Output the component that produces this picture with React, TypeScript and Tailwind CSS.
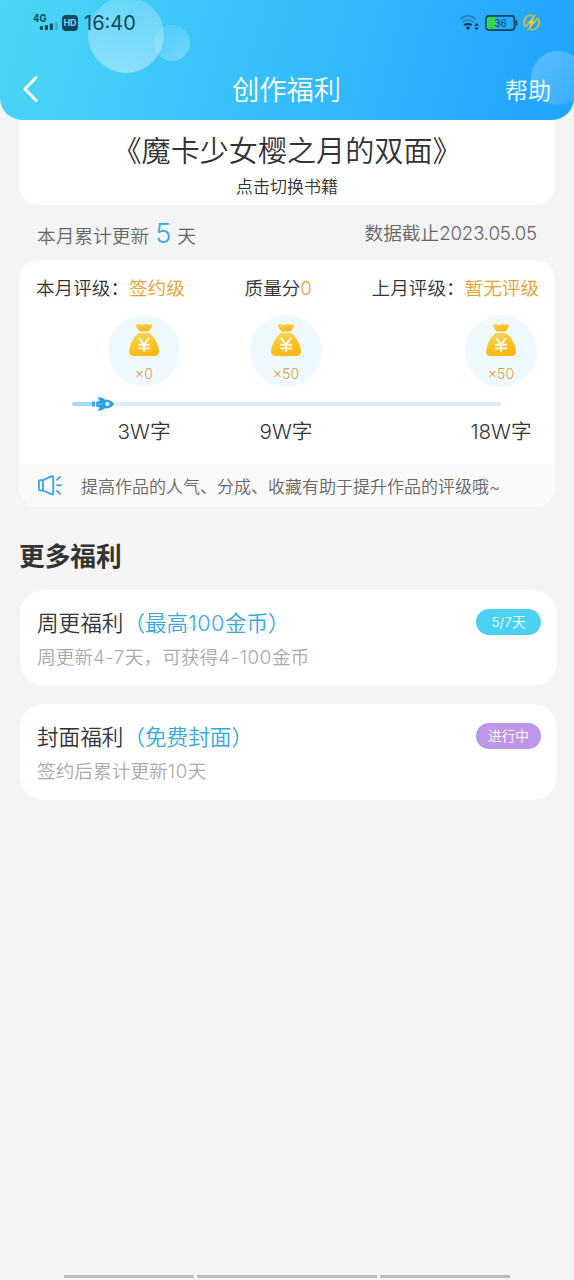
import clsx from 'clsx';

type Reward = { id: string; coins: string; words: string; className: string };

const rewards: Reward[] = [
  { id: '3w', coins: '×0', words: '3W字', className: 'ml-[89px]' },
  { id: '9w', coins: '×50', words: '9W字', className: 'ml-[70px]' },
  { id: '18w', coins: '×50', words: '18W字', className: 'ml-[143px]' },
];

function SignalIcon() {
  return (
    <svg width="26" height="20" viewBox="0 0 26 20" className="block text-[#10475a]">
      <text x="0" y="8.6" fontSize="10.5" fontWeight="700" fill="currentColor" fontFamily="Inter, sans-serif" textLength="13.5" lengthAdjust="spacingAndGlyphs">
        4G
      </text>
      <g fill="currentColor">
        <rect x="6.8" y="13" width="3.2" height="4" rx="1" />
        <rect x="11.8" y="12" width="3.2" height="5" rx="1" />
        <rect x="16.8" y="10.5" width="3.2" height="6.5" rx="1" />
        <rect x="21.8" y="9" width="3" height="8" rx="1" opacity="0.25" />
      </g>
    </svg>
  );
}

function WifiIcon() {
  return (
    <svg width="20" height="16" viewBox="0 0 20 16" fill="none" className="block">
      <path d="M1 4.2Q9 -2.2 17 4.2" stroke="#2389bb" strokeWidth="2" />
      <path d="M3.4 7Q9 2.6 14.6 7" stroke="#2389bb" strokeWidth="1.6" />
      <path d="M4.4 9.3Q9 6 13.6 9.3L11.8 11Q9 9 6.2 11Z" fill="#0d3553" />
      <circle cx="9" cy="13" r="1.8" fill="#0d3553" />
      <path d="M17.6 7.8L19.8 11H15.4ZM17.6 15.6L15.4 12.4H19.8Z" fill="#0d3553" />
    </svg>
  );
}

function BatteryIcon() {
  return (
    <svg width="33" height="16" viewBox="0 0 33 16" className="block">
      <path d="M4 1H11V15H4Q1 15 1 12V4Q1 1 4 1Z" fill="#35d84c" />
      <rect x="0.9" y="0.9" width="28.6" height="14.2" rx="3" fill="none" stroke="#104264" strokeWidth="1.7" />
      <rect x="30.7" y="5" width="1.6" height="6" rx="0.8" fill="#104264" />
      <text x="15.4" y="11.6" fontSize="10" fontWeight="400" textAnchor="middle" fill="#104264" fontFamily="Inter, sans-serif">
        36
      </text>
    </svg>
  );
}

function PowerIcon() {
  return (
    <svg width="17" height="17" viewBox="0 0 17 17" fill="none" className="block">
      <g stroke="#c9bc43" strokeWidth="1.8" strokeLinecap="round">
        <path d="M8.6 1.2A7.3 7.3 0 0 0 2.2 12.4L4.8 10.6" />
        <path d="M5 15.6L7.4 13.8" />
        <path d="M8.4 15.8A7.3 7.3 0 0 0 14.8 4.6L12.4 6.2" />
        <path d="M12 1.4L9.6 3.2" />
      </g>
      <path d="M11.6 2.2L4 9.4H7.6L5.8 14.6L13.2 7.2H9.6Z" fill="#ffd12a" />
    </svg>
  );
}

function MoneyBag() {
  return (
    <svg width="32" height="34" viewBox="0 0 32 34" className="block">
      <defs>
        <linearGradient id="bag" x1="0" y1="0" x2="0.4" y2="1">
          <stop offset="0" stopColor="#f7d96a" />
          <stop offset="0.55" stopColor="#fcc52c" />
          <stop offset="1" stopColor="#fdb713" />
        </linearGradient>
      </defs>
      <path d="M8.3 1.6Q10 .2 12.3 1.4Q14.1 2.4 16 1.2Q18 .1 20 1.2Q22 2 23.4 1.3Q24.8 2 23.6 4Q22 6.8 20.4 8.6H11.8Q9.6 6.5 8 3.5Q7.5 2.3 8.3 1.6Z" fill="url(#bag)" />
      <path d="M10.7 10H21.4C26 13.5 30.2 21 30.9 27.5C31.2 31 29.8 32.9 26.5 33H5.5C2.2 32.9 .8 31 1.1 27.5C1.8 21 6 13.5 10.7 10Z" fill="url(#bag)" />
      <path d="M11 15L16 21.5L21 15M16 21.5V29M10.2 21.7H21.8M10.2 25.4H21.8" fill="none" stroke="#fff" strokeWidth="1.9" />
    </svg>
  );
}

function Rocket() {
  return (
    <svg width="24" height="14" viewBox="0 0 24 14" className="block">
      <path d="M6.4 .3C10.5 .3 12.3 1.2 13.4 2.5C18 2.4 21.5 4.4 23.4 7C21.5 9.7 18 11.8 13.4 11.5C12.2 12.8 10.4 13.7 6.6 13.8L8.7 10.4L4.8 9.3V4.9L8.7 3.7Z" fill="#2c9fe9" />
      <path d="M1 4.8H4V6.4H1ZM0 6.6H4V7.8H0ZM1 8H4V9.5H1Z" fill="#2c9fe9" />
      <path d="M5 7.1H12" stroke="#8bd0fa" strokeWidth="0.8" />
      <circle cx="16.4" cy="7" r="2.1" fill="#fff" />
    </svg>
  );
}

function SpeakerIcon() {
  return (
    <svg width="24" height="21" viewBox="0 0 24 21" fill="none" stroke="#3ba9e3" strokeWidth="1.9" strokeLinecap="round" strokeLinejoin="round" className="block">
      <path d="M5 5.2L13.4 1.3Q15.2 .6 15.2 2.2V18.4Q15.2 20 13.4 19.2L5 15.5" />
      <path d="M5 5.2H2.4Q.9 5.2 .9 6.8V13.9Q.9 15.5 2.4 15.5H5Z" />
      <path d="M19 4.8L22 1.8M19.2 10.3H22.8M19 15.8L22 18.8" />
    </svg>
  );
}

function Header() {
  return (
    <header className="relative h-[120px] overflow-hidden rounded-b-[22px] bg-linear-[105deg,#4bd7f6_0%,#37c0fc_45%,#20a3ff_100%]">
      {/* Decorative bubbles */}
      <div className="absolute -top-[3px] left-[88px] size-[76px] rounded-full bg-linear-to-b from-white/20 to-white/40" />
      <div className="absolute top-[25px] left-[154px] size-9 rounded-full bg-linear-to-br from-white/5 to-white/30" />
      <div className="absolute top-[51px] left-[531px] size-[54px] rounded-full bg-linear-to-br from-white/25 to-white/10" />

      <div className="relative flex h-[45px] items-center justify-between pr-[34px] pl-[33px]">
        <div className="flex items-center">
          <SignalIcon />
          <span className="ml-[3px] flex h-4 w-4 items-center justify-center rounded-[4px] bg-[#10475a] text-[9px] leading-none font-bold text-[#74dbfb]">
            HD
          </span>
          <span className="ml-[6px] text-[20px] leading-none font-normal text-[#10475a]">16:40</span>
        </div>
        <div className="flex items-center">
          <WifiIcon />
          <span className="ml-[6px]"><BatteryIcon /></span>
          <span className="ml-[5px]"><PowerIcon /></span>
        </div>
      </div>

      <div className="grid h-[75px] grid-cols-[1fr_auto_1fr] items-start pr-[23px] pl-[22px] text-white">
        <button className="relative mt-[30px]" aria-label="返回">
          <svg width="17" height="28" viewBox="0 0 17 28" fill="none" className="block">
            <path d="M14 2.5L3 14L14 25.5" stroke="#fff" strokeWidth="3" strokeLinecap="round" strokeLinejoin="round" />
          </svg>
        </button>
        <h1 className="mt-[26px] text-[27.3px] leading-[40px]">创作福利</h1>
        <button className="relative mt-[28px] text-right text-[23px] leading-9">帮助</button>
      </div>
    </header>
  );
}

function RewardTrack() {
  return (
    <>
      <div className="mt-[12px] flex">
        {rewards.map((reward) => (
          <div key={reward.id} className={clsx('flex size-[72px] shrink-0 flex-col items-center rounded-full bg-[#eefaff] pt-2', reward.className)}>
            <MoneyBag />
            <span className="mt-2 text-[14px] leading-[18px] text-[#e09d2b]">{reward.coins}</span>
          </div>
        ))}
      </div>
      <div className="mt-[10px] ml-[53px] flex h-[14px] w-[429px] items-center">
        <div className="h-1 w-[19px] rounded-l-full bg-[#a5d8fb]" />
        <Rocket />
        <div className="h-1 flex-1 rounded-r-full bg-[#d8eefd]" />
      </div>
      <div className="mt-[6px] flex">
        {rewards.map((reward) => (
          <span key={reward.id} className={clsx('w-[72px] shrink-0 text-center text-[20.6px] leading-[30px] whitespace-nowrap text-[#333]', reward.className)}>
            {reward.words}
          </span>
        ))}
      </div>
    </>
  );
}

function RatingCard() {
  return (
    <section className="mx-[19px] h-[247px] overflow-hidden rounded-[20px] bg-white">
      <div className="flex justify-between pt-[13px] pr-[16px] pl-[17px] text-[18.6px] leading-[30px] text-[#333]">
        <span>本月评级：<span className="text-[#e8a02c]">签约级</span></span>
        <span>质量分<span className="text-[#e8a02c]">0</span></span>
        <span>上月评级：<span className="text-[#e8a02c]">暂无评级</span></span>
      </div>
      <RewardTrack />
      <div className="mt-[17px] flex h-[43px] items-center bg-[#fafafa] pl-[19px]">
        <SpeakerIcon />
        <p className="ml-[19px] pt-0.5 text-[17px] leading-6 text-[#666]">提高作品的人气、分成、收藏有助于提升作品的评级哦~</p>
      </div>
    </section>
  );
}

type BenefitProps = {
  title: string;
  highlight: React.ReactNode;
  description: React.ReactNode;
  status: string;
  statusClassName: string;
};

function BenefitCard({ title, highlight, description, status, statusClassName }: BenefitProps) {
  return (
    <article className="mr-[17px] ml-5 flex h-24 justify-between rounded-[24px] bg-white pr-[16px] pl-[17px]">
      <div className="pt-[17px]">
        <h3 className="text-[21.6px] leading-8 text-[#333]">
          {title}
          <span className="text-[#35a8e0]">（{highlight}）</span>
        </h3>
        <p className="mt-[5px] text-[18.7px] leading-7 text-[#aaa]">{description}</p>
      </div>
      <span className={clsx('mt-[19px] flex h-[26px] w-[65px] items-center justify-center rounded-full text-[13.7px] text-white', statusClassName)}>
        {status}
      </span>
    </article>
  );
}

export default function App() {
  return (
    <div className="flex h-[1280px] w-[574px] flex-col overflow-hidden bg-[#f4f4f4] font-['Inter','Noto_Sans_CJK_SC',sans-serif] font-[350]">
      <Header />

      <section className="mx-[19px] h-[85px] rounded-b-[20px] bg-white text-center">
        <h2 className="pt-[11px] text-[29.1px] leading-[42px] text-[#333]">《魔卡少女樱之月的双面》</h2>
        <p className="mt-[2px] text-[17px] leading-6 text-[#333]">点击切换书籍</p>
      </section>

      <div className="flex h-[55px] justify-between pr-[37px] pl-[37px] text-[18.7px] text-[#666]">
        <p className="pt-[11px] leading-9">
          本月累计更新<span className="mx-[6px] text-[27px] text-[#35a8e0]">5</span>天
        </p>
        <p className="pt-[14px] leading-[30px]">
          数据截止<span className="tracking-[-0.2px]">2023.05.05</span>
        </p>
      </div>

      <RatingCard />

      <h2 className="mt-[30px] ml-[19px] text-[25.7px] leading-10 font-bold text-[#333]">更多福利</h2>

      <div className="mt-[13px] flex flex-col gap-[18px]">
        <BenefitCard
          title="周更福利"
          highlight={<>最高<span className="tracking-[0.5px]">100</span>金币</>}
          description={
            <>
              周更新<span className="tracking-[0.5px]">4-7</span>天，可获得<span className="tracking-[0.6px]">4-100</span>金币
            </>
          }
          status="5/7天"
          statusClassName="bg-[#4bd2f3]"
        />
        <BenefitCard
          title="封面福利"
          highlight="免费封面"
          description={<>签约后累计更新<span className="tracking-[0.5px]">10</span>天</>}
          status="进行中"
          statusClassName="bg-[#bf96e7]"
        />
      </div>

      {/* System navigation bar */}
      <div className="mt-auto mb-[2px] flex justify-center">
        <div className="flex gap-[3px] bg-white">
          <div className="h-[3px] w-[130px] bg-[#bbb]" />
          <div className="h-[3px] w-[180px] bg-[#bbb]" />
          <div className="h-[3px] w-[130px] bg-[#bbb]" />
        </div>
      </div>
    </div>
  );
}
